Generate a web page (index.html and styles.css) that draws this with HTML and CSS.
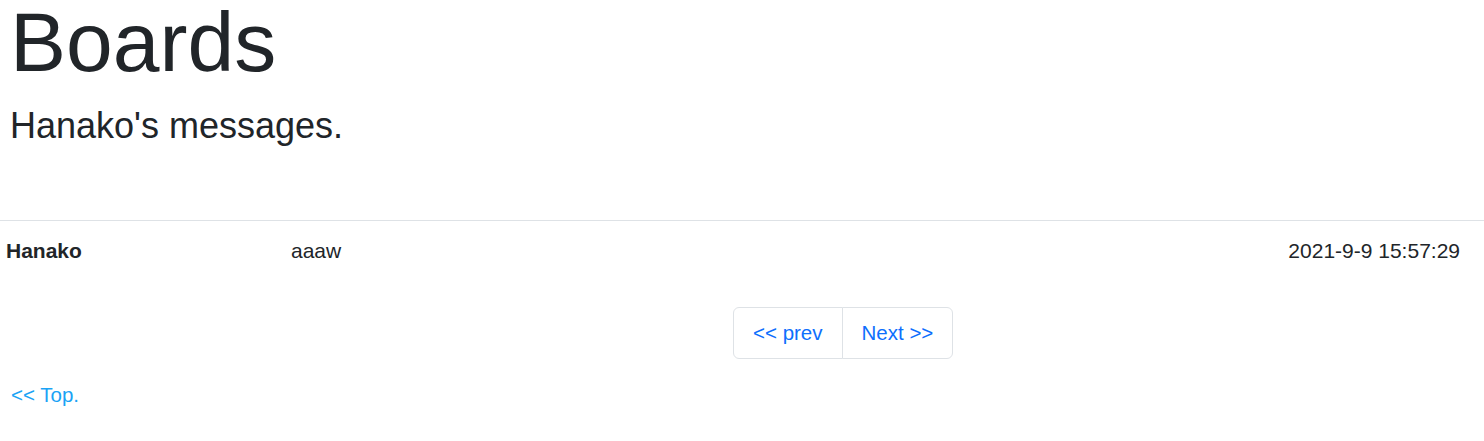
FILE: index.html
```html
<!DOCTYPE html>
<html lang="en">
<head>
<meta charset="utf-8">
<title>Boards</title>
<link rel="stylesheet" href="styles.css">
</head>
<body>
<header class="head">
  <h1 class="title">Boards</h1>
  <h3 class="lead">Hanako's messages.</h3>
</header>
<table class="msgs">
  <tbody>
    <tr>
      <th class="c-name">Hanako</th>
      <td class="c-msg">aaaw</td>
      <td class="c-date">2021-9-9 15:57:29</td>
    </tr>
  </tbody>
</table>
<nav class="pager-wrap">
  <ul class="pager">
    <li class="pg-item"><a class="pg-link" href="#">&lt;&lt; prev</a></li>
    <li class="pg-item"><a class="pg-link" href="#">Next &gt;&gt;</a></li>
  </ul>
</nav>
<p class="back"><a class="back-link" href="#">&lt;&lt; Top.</a></p>
</body>
</html>
```
FILE: styles.css
```css
* { box-sizing: border-box; }
html, body { margin: 0; padding: 0; background: #fff; }
body {
  font-family: "Liberation Sans", Arial, sans-serif;
  color: #212529;
  font-size: 21px;
}
.head { padding: 0 10px; }
.title {
  margin: 0;
  font-size: 84px;
  font-weight: 300;
  line-height: 84px;
}
.lead {
  margin: 21px 0 0;
  font-size: 36px;
  font-weight: 400;
  line-height: 42px;
}
.msgs {
  width: 100%;
  border-collapse: collapse;
  margin-top: 73px;
}
.msgs th, .msgs td {
  border-top: 1px solid #dee2e6;
  padding: 18px 6px 20px;
  text-align: left;
  line-height: 24px;
  font-size: 21px;
}
.c-name { width: 285px; font-weight: 700; }
.c-date { text-align: right !important; padding-right: 24px !important; }
.pager-wrap { display: flex; padding-left: 733px; margin-top: 24px; }
.pager {
  display: flex;
  list-style: none;
  margin: 0;
  padding: 0;
}
.pg-link {
  display: block;
  padding: 12px 19px 13px;
  font-size: 20.5px;
  line-height: 25px;
  color: #0d6efd;
  text-decoration: none;
  border: 1px solid #dee2e6;
  background: #fff;
}
.pg-item:first-child .pg-link { border-radius: 6px 0 0 6px; }
.pg-item + .pg-item .pg-link { margin-left: -1px; border-radius: 0 6px 6px 0; }
.back { margin: 24px 0 0; padding: 0 11px; font-size: 20.5px; line-height: 24px; }
.back-link { color: #1aa3f5; text-decoration: none; }
```
